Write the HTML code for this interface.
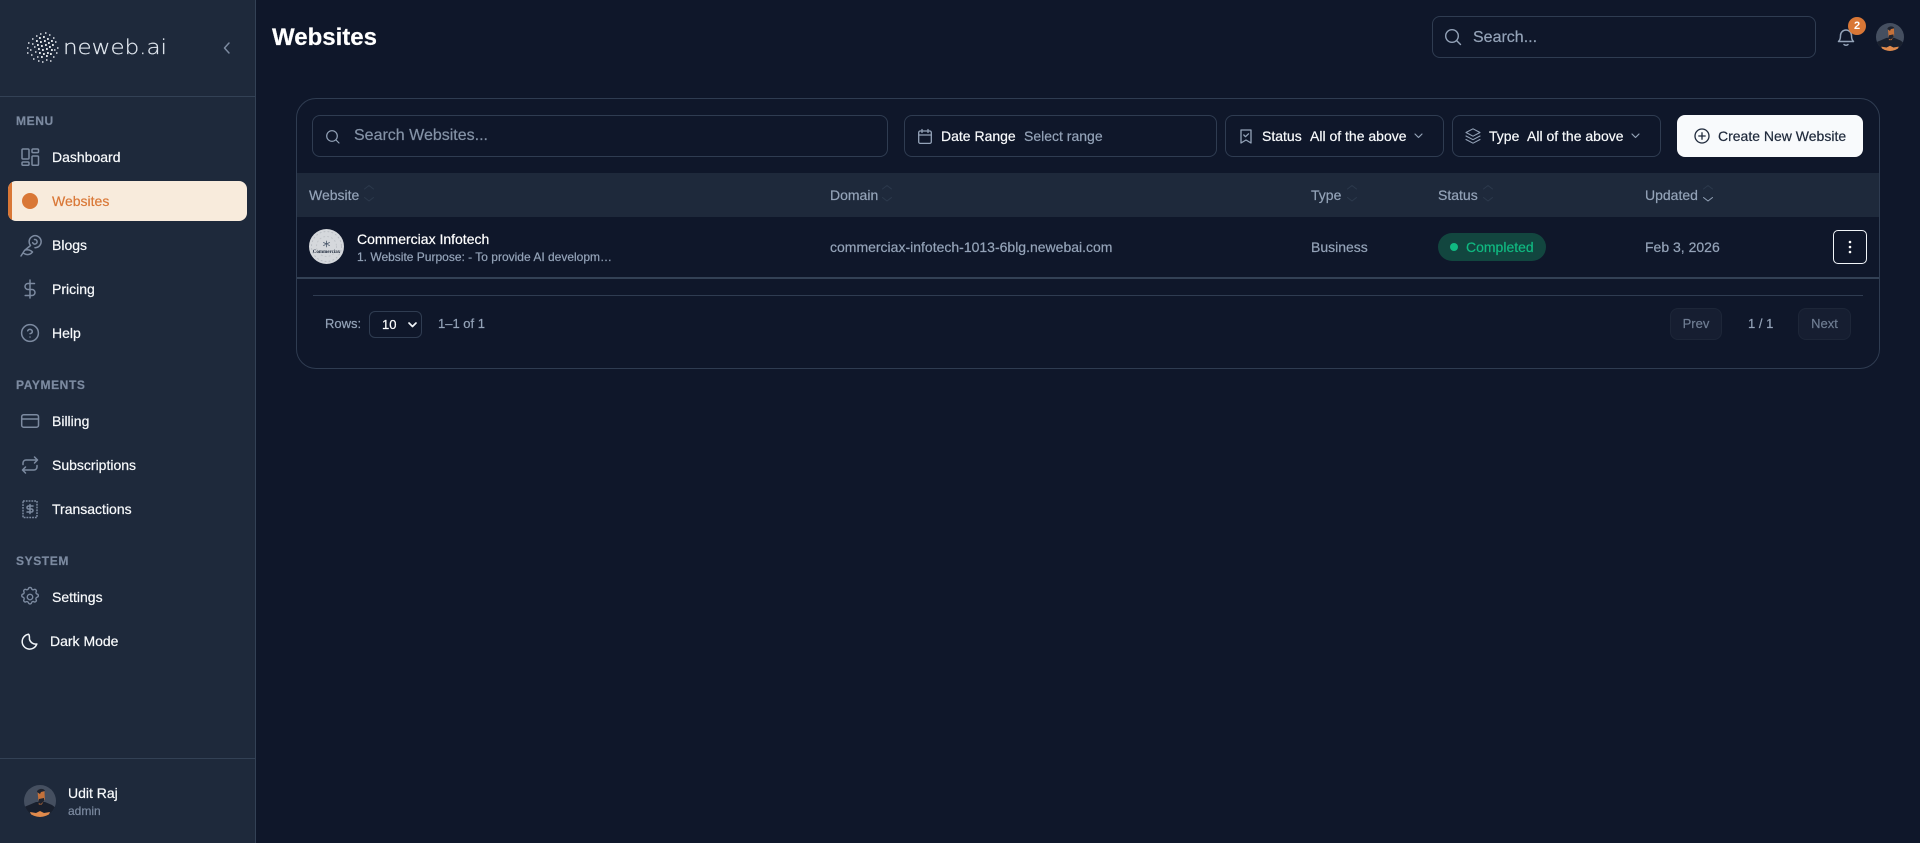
<!DOCTYPE html>
<html><head><meta charset="utf-8"><title>Websites</title>
<style>
*{box-sizing:border-box}
html,body{margin:0;padding:0;width:1920px;height:843px;overflow:hidden;background:#0f172a;font-family:"Liberation Sans",sans-serif;color:#fff}
.t{position:absolute;white-space:nowrap;line-height:20px;font-size:14px;-webkit-text-stroke:.2px}
.b{position:absolute;border:1px solid #2f3c51;border-radius:8px}
.g{color:#94a3b8}
.m{color:#f8fafc}
.h{font-size:12px;font-weight:700;letter-spacing:.6px;color:#7c8aa0}
svg{position:absolute;overflow:visible;fill:none;stroke-linecap:round;stroke-linejoin:round}
.i{stroke:#7c8aa0;stroke-width:1.5}
</style></head><body>
<!-- sidebar -->
<div style="position:absolute;left:0;top:0;width:256px;height:843px;background:#1e293b;border-right:1px solid #334155"></div>
<div style="position:absolute;left:0;top:96px;width:255px;height:1px;background:#334155"></div>
<div style="position:absolute;left:0;top:758px;width:255px;height:1px;background:#334155"></div>

<svg style="left:22px;top:28px" width="40" height="40" viewBox="0 0 40 40">
<path stroke="#dfe3e9" stroke-width="1.600" stroke-linecap="butt" d="M10 11h1.500M14 8h1.500M18 6h1.500M23 5h1.500M27 7h1.500M31 10h1.500M33 14h1.500M6 15h1.500M10 16h1.500M5 20h1.500M8 22h1.500M5 25h1.500M9 27h1.500M11 31h1.500M15 29h1.500M16 33h1.500M20 34h1.500M24 32h1.500M28 33h1.500M31 29h1.500M34 25h1.500M35 20h1.500M32 22h1.500M13 24h1.500M12 19h1.500"/>
<path stroke="#f8fafc" stroke-width="1.800" stroke-linecap="butt" d="M17 10h1.800M21 9h1.800M25 11h1.800M29 13h1.800M14 13h1.800M18 14h1.800M22 13h1.800M26 15h1.800M30 17h1.800M15 17h1.800M19 18h1.800M23 17h1.800M27 19h1.800M16 21h1.800M20 22h1.800M24 21h1.800M29 22h1.800M17 25h1.800M21 26h1.800M25 25h1.800M28 26h1.800M19 29h1.800M24 28h1.800"/>
</svg>
<div class="t" style="left:63px;top:32px;line-height:30px;font-family:'DejaVu Sans',sans-serif;font-weight:200;font-size:20.5px;color:#e2e8f0;transform:scaleX(1.120);transform-origin:left center">neweb.ai</div>
<svg style="left:223px;top:42px" width="8" height="12" class="i"><path d="M6 1 1.500 6 6 11"/></svg>

<div class="t h" style="left:16px;top:111px">MENU</div>
<svg class="i" style="left:21px;top:148px" width="18" height="18"><rect x="1" y="1" width="7" height="10" rx="1"/><rect x="1" y="14" width="7" height="3.200" rx="1"/><rect x="11" y="1" width="6.500" height="3.600" rx="1"/><rect x="11" y="8" width="6.500" height="9.200" rx="1"/></svg>
<div class="t m" style="left:52px;top:147px">Dashboard</div>

<div style="position:absolute;left:8px;top:181px;width:239px;height:40px;background:#f8ebdc;border-radius:8px;overflow:hidden"><div style="width:4px;height:40px;background:#d97736"></div></div>
<div style="position:absolute;left:22px;top:193px;width:16px;height:16px;border-radius:50%;background:#d97736"></div>
<div class="t" style="left:52px;top:191px;color:#d97736">Websites</div>

<svg class="i" style="left:15px;top:230px" width="30" height="30"><path d="M15.500 15.500a6 6 0 1 1 4.500 2.200M19.500 9.500a2.300 2.300 0 1 1-1.800 3.200M15.500 15.500 9.500 20.500 6 26M10 20c3-.8 6 .3 7.500 2-2 2.500-5 3.500-8.500 1.500"/></svg>
<div class="t m" style="left:52px;top:235px">Blogs</div>

<svg class="i" style="left:24px;top:279px" width="12" height="20"><path d="M6 1v18M10.500 4.500H4a3 3 0 0 0 0 6h4a3 3 0 0 1 0 6H1.200"/></svg>
<div class="t m" style="left:52px;top:279px">Pricing</div>

<svg class="i" style="left:21px;top:324px" width="18" height="18"><circle cx="9" cy="9" r="8.400"/><path d="M6.700 6.800a2.400 2.400 0 0 1 4.600.8c0 1.500-2.300 2.100-2.300 2.100M9 13h.01"/></svg>
<div class="t m" style="left:52px;top:323px">Help</div>

<div class="t h" style="left:16px;top:375px">PAYMENTS</div>
<svg class="i" style="left:21px;top:414px" width="18" height="14"><rect x=".7" y=".7" width="16.800" height="12.500" rx="2"/><path d="M.7 5h16.800"/></svg>
<div class="t m" style="left:52px;top:411px">Billing</div>

<svg class="i" style="left:21px;top:456px" width="18" height="18"><path d="M13.500 1 16.500 4 13.500 7M2 8.500V7a3 3 0 0 1 3-3h11.500M4.500 17 1.500 14 4.500 11M16 9.500V11a3 3 0 0 1-3 3H1.500"/></svg>
<div class="t m" style="left:52px;top:455px">Subscriptions</div>

<svg class="i" style="left:22px;top:500px" width="16" height="18"><rect x="1" y="1" width="14" height="16.500" stroke-dasharray="1.800 1" stroke-linecap="butt"/><path d="M11 6H6.500a1.500 1.500 0 0 0 0 3h3a1.500 1.500 0 0 1 0 3H5M8 4.500v9"/></svg>
<div class="t m" style="left:52px;top:499px">Transactions</div>

<div class="t h" style="left:16px;top:551px">SYSTEM</div>
<svg class="i" style="left:19px;top:586px;stroke-width:1.500" width="22" height="22" viewBox="0 0 24 24"><path d="M10.300 2.800c.4-1.700 3-1.700 3.400 0a1.700 1.700 0 0 0 2.600 1.100c1.500-.9 3.300.8 2.400 2.400a1.700 1.700 0 0 0 1.100 2.500c1.700.4 1.700 3 0 3.400a1.700 1.700 0 0 0-1.100 2.600c.9 1.500-.9 3.300-2.400 2.400a1.700 1.700 0 0 0-2.600 1.100c-.4 1.700-3 1.700-3.400 0a1.700 1.700 0 0 0-2.500-1.100c-1.500.9-3.300-.9-2.400-2.400a1.700 1.700 0 0 0-1.100-2.600c-1.700-.4-1.700-3 0-3.400a1.700 1.700 0 0 0 1.100-2.500c-.9-1.600.9-3.300 2.400-2.400a1.700 1.700 0 0 0 2.500-1.100z"/><circle cx="12" cy="12" r="3"/></svg>
<div class="t m" style="left:52px;top:587px">Settings</div>

<svg style="left:21px;top:633px;stroke:#f1f5f9;stroke-width:1.500" width="17" height="17"><path d="M7.500 1.200A7.500 7.500 0 1 0 15.800 11 6.500 6.500 0 0 1 8.500 6.500C8.300 4.300 8.900 2.500 7.500 1.200z"/></svg>
<div class="t m" style="left:50px;top:631px">Dark Mode</div>

<svg style="left:24px;top:785px" width="32" height="32" viewBox="0 0 32 32"><defs><clipPath id="a1"><circle cx="16" cy="16" r="16"/></clipPath></defs><g clip-path="url(#a1)"><rect width="32" height="32" fill="#454f60"/><path d="M0 32V22L5 20l7-3h9l7 3 4 3v9z" fill="#181f2d"/><path d="M13.500 6c1-2.500 6-2.500 7 0l.3 8-3 5.500h-3z" fill="#c4713a"/><path d="M13 7c0-3.500 7-4.500 8-1l-4 1-1 2zM15 14l5-1 0 3-3 3-3-1z" fill="#1f2430"/><path d="M6 27 12 28 16 26 20 28 26 27 24 32H8z" fill="#e08a4c"/></g></svg>
<div class="t m" style="left:68px;top:783px">Udit Raj</div>
<div class="t" style="left:68px;top:801px;font-size:12px;color:#7c8aa0">admin</div>

<!-- header -->
<div class="t" style="left:272px;top:22px;line-height:32px;font-size:24px;font-weight:700">Websites</div>
<div class="b" style="left:1432px;top:16px;width:384px;height:42px"></div>
<svg style="left:1445px;top:29px;stroke:#94a3b8;stroke-width:1.400" width="16" height="16"><circle cx="7" cy="7" r="6.300"/><path d="m11.800 11.800 3.700 3.700"/></svg>
<div class="t g" style="left:1473px;top:28px;font-size:16px">Search...</div>
<svg style="left:1837px;top:27px;stroke:#94a3b8;stroke-width:1.500" width="18" height="20"><path d="M1.500 14.500c1.200-1 2-2.800 2-6a5.500 5.500 0 0 1 11 0c0 3.200.8 5 2 6zM7 17.500c1 1 3 1 4 0"/></svg>
<div style="position:absolute;left:1848px;top:17px;width:18px;height:18px;border-radius:50%;background:#d97736;font-size:11px;font-weight:700;line-height:18px;text-align:center">2</div>
<svg style="left:1876px;top:23px" width="28" height="28" viewBox="0 0 32 32"><defs><clipPath id="a2"><circle cx="16" cy="16" r="16"/></clipPath></defs><g clip-path="url(#a2)"><rect width="32" height="32" fill="#454f60"/><path d="M0 32V22L5 20l7-3h9l7 3 4 3v9z" fill="#181f2d"/><path d="M13.500 6c1-2.500 6-2.500 7 0l.3 8-3 5.500h-3z" fill="#c4713a"/><path d="M13 7c0-3.500 7-4.500 8-1l-4 1-1 2zM15 14l5-1 0 3-3 3-3-1z" fill="#1f2430"/><path d="M6 27 12 28 16 26 20 28 26 27 24 32H8z" fill="#e08a4c"/></g></svg>

<!-- card -->
<div class="b" style="left:296px;top:98px;width:1584px;height:271px;border-radius:20px"></div>
<div class="b" style="left:312px;top:115px;width:576px;height:42px"></div>
<svg style="left:326px;top:130px;stroke:#94a3b8;stroke-width:1.200" width="14" height="14"><circle cx="6" cy="6" r="5.300"/><path d="m10 10 3 3"/></svg>
<div class="t" style="left:354px;top:126px;font-size:16px;color:#8492a6">Search Websites...</div>

<div class="b" style="left:904px;top:115px;width:313px;height:42px"></div>
<svg style="left:918px;top:129px;stroke:#94a3b8;stroke-width:1.300" width="14" height="15"><rect x=".7" y="2" width="12.600" height="12.400" rx="1.500"/><path d="M.7 6h12.600M4 .5v3M10 .5v3"/></svg>
<div class="t m" style="left:941px;top:126px">Date Range</div>
<div class="t g" style="left:1024px;top:126px">Select range</div>

<div class="b" style="left:1225px;top:115px;width:219px;height:42px"></div>
<svg style="left:1240px;top:129px;stroke:#94a3b8;stroke-width:1.300" width="12" height="15"><path d="M1 1h10v13l-5-3-5 3zM3.800 6l1.700 1.700L8.500 4.800"/></svg>
<div class="t m" style="left:1262px;top:126px">Status</div>
<div class="t m" style="left:1310px;top:126px">All of the above</div>
<svg style="left:1414px;top:133px;stroke:#94a3b8;stroke-width:1.200" width="9" height="6"><path d="m1 1 3.500 3.500L8 1"/></svg>

<div class="b" style="left:1452px;top:115px;width:209px;height:42px"></div>
<svg style="left:1465px;top:128px;stroke:#94a3b8;stroke-width:1.100" width="16" height="16"><path d="M8 .8 15 4.500 8 8.200 1 4.500zM1 8l7 3.700L15 8M1 11.500l7 3.700 7-3.700"/></svg>
<div class="t m" style="left:1489px;top:126px">Type</div>
<div class="t m" style="left:1527px;top:126px">All of the above</div>
<svg style="left:1631px;top:133px;stroke:#94a3b8;stroke-width:1.200" width="9" height="6"><path d="m1 1 3.500 3.500L8 1"/></svg>

<div style="position:absolute;left:1677px;top:115px;width:186px;height:42px;border-radius:8px;background:#f8fafc"></div>
<svg style="left:1694px;top:128px;stroke:#1e293b;stroke-width:1.300" width="16" height="16"><circle cx="8" cy="8" r="7"/><path d="M8 4.800v6.400M4.800 8h6.400"/></svg>
<div class="t" style="left:1718px;top:126px;color:#1e293b">Create New Website</div>

<!-- table -->
<div style="position:absolute;left:297px;top:173px;width:1582px;height:44px;background:#1e293b"></div>
<div class="t g" style="left:309px;top:185px">Website</div>
<div class="t g" style="left:830px;top:185px">Domain</div>
<div class="t g" style="left:1311px;top:185px">Type</div>
<div class="t g" style="left:1438px;top:185px">Status</div>
<div class="t g" style="left:1645px;top:185px">Updated</div>
<svg style="left:0;top:0;stroke:#2c394c;stroke-width:1" width="1920" height="220"><path d="M364.500 189l4.500-3.500 4.500 3.500M364.500 197.500l4.500 3.500 4.500-3.500M882.500 189l4.500-3.500 4.500 3.500M882.500 197.500l4.500 3.500 4.500-3.500M1347.500 189l4.500-3.500 4.500 3.500M1347.500 197.500l4.500 3.500 4.500-3.500M1483.500 189l4.500-3.500 4.500 3.500M1483.500 197.500l4.500 3.500 4.500-3.500M1703.500 189l4.500-3.500 4.500 3.500"/><path d="M1703.500 197.500l4.500 3.500 4.500-3.500" stroke="#94a3b8"/></svg>

<svg style="left:309px;top:229px" width="35" height="35"><circle cx="17.500" cy="17.500" r="17.500" fill="#d5d8dc"/><circle cx="17.500" cy="17.500" r="15" stroke="#b9bdc3" stroke-dasharray="1 3"/><circle cx="17.500" cy="17.500" r="10" stroke="#c0c4c9" stroke-dasharray="1 3"/><path d="M17.500 12v6M14.500 13.500l6 3M20.500 13.500l-6 3" stroke="#475569" stroke-width=".8"/><text x="17.500" y="24" text-anchor="middle" font-family="Liberation Serif,serif" font-size="5" font-weight="700" fill="#1e293b">Commerciax</text></svg>
<div class="t" style="left:357px;top:229px;color:#fff">Commerciax Infotech</div>
<div class="t g" style="left:357px;top:247px;font-size:12px">1. Website Purpose: - To provide AI developm…</div>
<div class="t g" style="left:830px;top:237px">commerciax-infotech-1013-6blg.newebai.com</div>
<div class="t g" style="left:1311px;top:237px">Business</div>
<div style="position:absolute;left:1438px;top:233px;width:108px;height:28px;border-radius:14px;background:#12463f"></div>
<div style="position:absolute;left:1450px;top:243px;width:8px;height:8px;border-radius:50%;background:#10b981"></div>
<div class="t" style="left:1466px;top:237px;color:#10b981">Completed</div>
<div class="t g" style="left:1645px;top:237px">Feb 3, 2026</div>
<div style="position:absolute;left:1833px;top:230px;width:34px;height:34px;border:1.500px solid #f1f5f9;border-radius:5px"></div>
<svg style="left:1848px;top:240px" width="4" height="14"><circle cx="2" cy="2" r="1.300" fill="#fff"/><circle cx="2" cy="7" r="1.300" fill="#fff"/><circle cx="2" cy="12" r="1.300" fill="#fff"/></svg>
<div style="position:absolute;left:297px;top:277px;width:1582px;height:2px;background:#334155"></div>
<div style="position:absolute;left:313px;top:295px;width:1550px;height:1px;background:#2f3c51"></div>

<div class="t g" style="left:325px;top:314px;font-size:13px">Rows:</div>
<div class="b" style="left:369px;top:311px;width:53px;height:27px;border-radius:6px"></div>
<div class="t" style="left:382px;top:315px;font-size:13px">10</div>
<svg style="left:408px;top:322px;stroke:#f1f5f9;stroke-width:1.700" width="9" height="6"><path d="m1 1 3.500 3.500L8 1"/></svg>
<div class="t g" style="left:438px;top:314px;font-size:13px">1–1 of 1</div>

<div class="b" style="left:1670px;top:308px;width:52px;height:32px;background:#161e31;border-color:#1d2638;font-size:13px;line-height:30px;text-align:center;color:#6f7d92;-webkit-text-stroke:.2px">Prev</div>
<div class="t g" style="left:1748px;top:314px;font-size:13px">1 / 1</div>
<div class="b" style="left:1798px;top:308px;width:53px;height:32px;background:#161e31;border-color:#1d2638;font-size:13px;line-height:30px;text-align:center;color:#6f7d92;-webkit-text-stroke:.2px">Next</div>
</body></html>
